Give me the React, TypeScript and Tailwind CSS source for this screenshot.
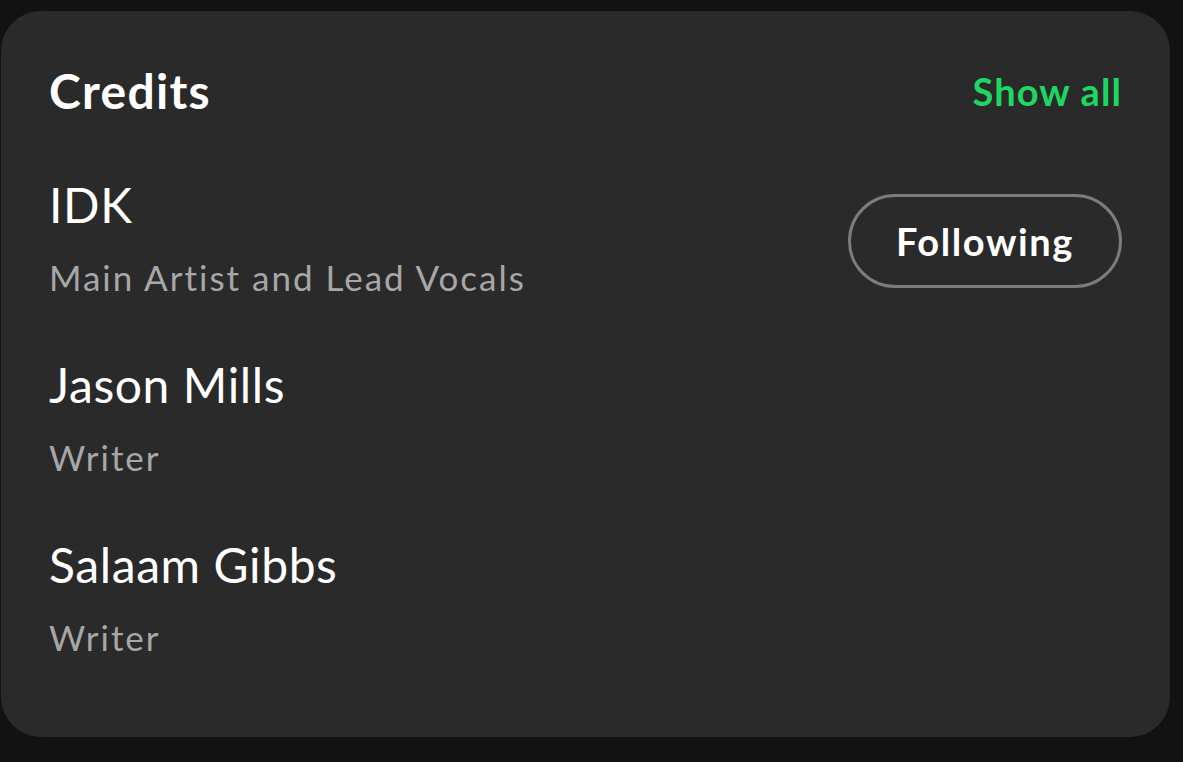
const credits = [
  { name: 'IDK', role: 'Main Artist and Lead Vocals', following: true },
  { name: 'Jason Mills', role: 'Writer', following: false },
  { name: 'Salaam Gibbs', role: 'Writer', following: false },
];

export default function App() {
  return (
    <div
      className="min-h-[762px] w-[1183px] bg-[#121212] pt-[11px] pl-[1px] pr-[13px] pb-[25px]"
      style={{ fontFamily: 'Lato, "Liberation Sans", sans-serif' }}
    >
      <div className="h-[726px] rounded-[40px] bg-[#2a2a2a] px-[48px] pt-[56px]">
        <div className="flex items-center justify-between">
          <h2 className="text-[48px] leading-[48px] font-bold tracking-[1.3px] text-white">Credits</h2>
          <a className="text-[38px] leading-[48px] font-bold tracking-[1.1px] text-[#1ed760]">Show all</a>
        </div>

        <ul className="mt-[66px] flex flex-col gap-[60px]">
          {credits.map((c) => (
            <li key={c.name} className="flex items-center justify-between">
              <div className="flex flex-col gap-[24px]">
                <span className="text-[48px] leading-[48px] tracking-[0.6px] text-white">{c.name}</span>
                <span className="text-[35px] leading-[48px] tracking-[2px] text-[#a7a7a7]">{c.role}</span>
              </div>
              {c.following && (
                <button className="h-[94px] w-[274px] rounded-full border-[3px] border-[#7c7c7c] text-[38px] font-bold tracking-[1.6px] text-white">
                  Following
                </button>
              )}
            </li>
          ))}
        </ul>
      </div>
    </div>
  );
}
